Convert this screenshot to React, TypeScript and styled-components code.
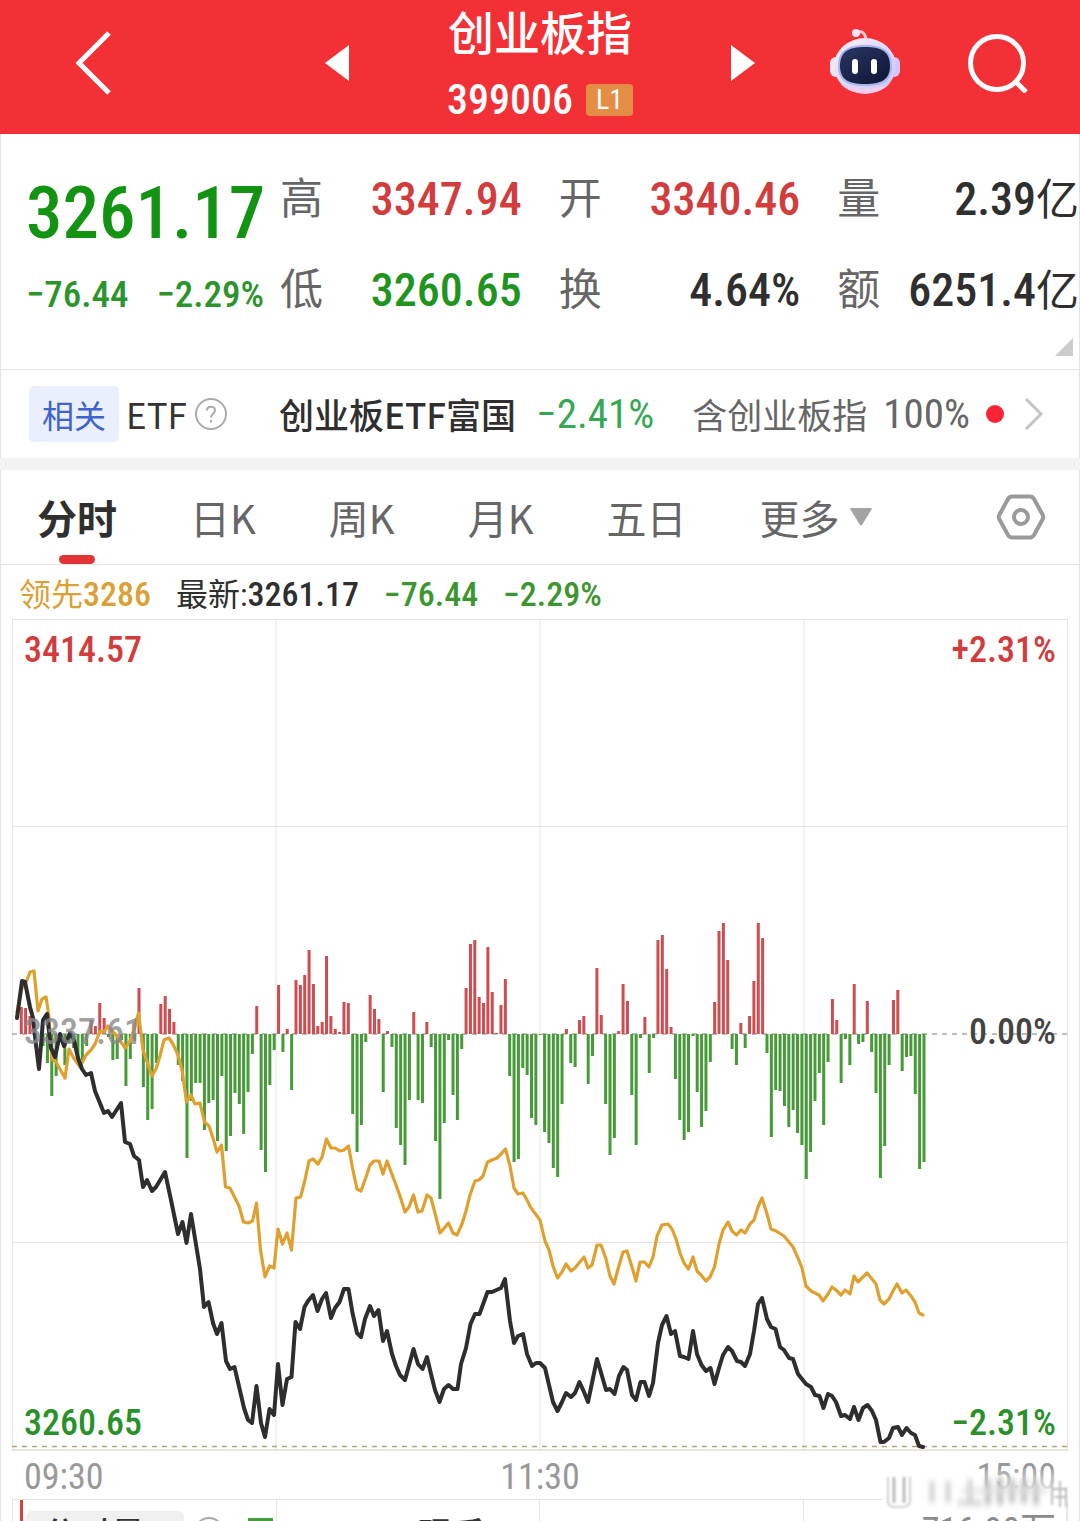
import React from "react";
import styled, { createGlobalStyle } from "styled-components";

const GlobalStyle = createGlobalStyle`
  * { box-sizing: border-box; }
  body {
    margin: 0;
    background: #fff;
    font-family: "Roboto Condensed", Roboto, "Noto Sans CJK SC", sans-serif;
    color: #333;
  }
  button {
    border: 0;
    padding: 0;
    background: none;
    font: inherit;
    color: inherit;
    cursor: pointer;
  }
  dl, dt, dd, h1, p { margin: 0; }
  svg { display: block; }
`;

const cjk = `"Noto Sans CJK SC", sans-serif`;

const palette = {
  red: "#d23c3c",
  green: "#129312",
  softGreen: "#3c9630",
  dark: "#2f2f2f",
  grey: "#666",
  line: "#e6e6e6",
};

const Page = styled.div`
  display: flex;
  flex-direction: column;
  height: 100vh;
  overflow: hidden;
`;

const Header = styled.header`
  flex: none;
  display: grid;
  grid-template-columns: 1fr 430px 1fr;
  align-items: center;
  height: 134px;
  background: #f23036;
  color: #fff;
`;

const HeaderButton = styled.button`
  padding-bottom: 9px;
`;

const HeaderLeft = styled.div`
  padding-left: 75px;
`;

const HeaderCenter = styled.div`
  display: flex;
  align-items: center;
  justify-content: space-between;
`;

const HeaderRight = styled.div`
  display: flex;
  align-items: center;
  justify-content: flex-end;
  gap: 67px;
  padding-right: 52px;
`;

const TitleBlock = styled.div`
  display: flex;
  flex-direction: column;
  align-items: center;
`;

const Title = styled.h1`
  font-size: 46px;
  line-height: 66px;
  font-weight: 500;
`;

const CodeLine = styled.div`
  display: flex;
  align-items: center;
  gap: 13px;
  font-size: 42px;
  line-height: 66px;
  font-weight: 500;
`;

const LevelBadge = styled.span`
  padding: 0 10px;
  border-radius: 4px;
  background: #e48d45;
  font-size: 28px;
  line-height: 32px;
  font-weight: 400;
`;

const Content = styled.main`
  flex: 1;
  display: flex;
  flex-direction: column;
  box-shadow: inset 1px 0 #e2e2e2, inset -1px 0 #e2e2e2;
`;

const Quote = styled.section`
  flex: none;
  position: relative;
  display: grid;
  grid-template-columns: 254px 1fr;
  height: 236px;
  padding: 20px 1px 0 26px;
  border-bottom: 1px solid ${palette.line};
`;

const LastPrice = styled.div`
  font-size: 73px;
  line-height: 118px;
  font-weight: 500;
  color: ${palette.green};
`;

const ChangeRow = styled.div`
  display: flex;
  justify-content: space-between;
  padding-right: 16px;
  font-size: 37px;
  line-height: 46px;
  font-weight: 500;
  color: #2c942c;
`;

const Stats = styled.dl`
  display: grid;
  grid-template-columns: repeat(3, 1fr);
  grid-auto-rows: 91px;
  column-gap: 37px;
`;

const Stat = styled.div`
  display: flex;
  justify-content: space-between;
  font-size: 43px;
  line-height: 91px;
  white-space: nowrap;
`;

const StatLabel = styled.dt`
  color: ${palette.grey};
`;

const StatValue = styled.dd<{ $color: string }>`
  font-size: 46px;
  font-weight: 500;
  color: ${(p) => p.$color};
`;

const Unit = styled.span`
  font-size: 43px;
  font-weight: 400;
`;

const ExpandCorner = styled.button`
  position: absolute;
  right: 7px;
  bottom: 13px;
  width: 18px;
  height: 18px;
  background: #ccc;
  clip-path: polygon(100% 0, 100% 100%, 0 100%);
`;

const Related = styled.section`
  flex: none;
  display: flex;
  align-items: center;
  height: 100px;
  padding: 0 36px 0 29px;
  border-bottom: 12px solid #f3f3f3;
  font-family: ${cjk};
  font-size: 35px;
  line-height: 56px;
  white-space: nowrap;
`;

const RelatedBadge = styled.span`
  margin-right: 7px;
  padding: 0 13px;
  border-radius: 5px;
  background: #e9effd;
  font-size: 32px;
  color: #3f62cc;
`;

const HelpButton = styled.button`
  margin-left: 8px;
`;

const EtfLink = styled.a`
  flex: 1;
  display: flex;
  align-items: center;
  justify-content: space-between;
  margin-left: 52px;
  color: ${palette.grey};
  text-decoration: none;
`;

const EtfName = styled.span`
  font-weight: 500;
  color: ${palette.dark};
`;

const Figure = styled.span<{ $color?: string }>`
  font-family: "Roboto Condensed", Roboto, sans-serif;
  font-size: 41px;
  color: ${(p) => p.$color ?? "inherit"};
`;

const EtfShare = styled.span`
  display: flex;
  align-items: center;
  gap: 16px;
  margin-left: 18px;
`;

const RedDot = styled.span`
  width: 18px;
  height: 18px;
  border-radius: 50%;
  background: #fa2434;
`;

const Tabs = styled.nav`
  flex: none;
  display: flex;
  align-items: center;
  gap: 73px;
  height: 95px;
  padding: 0 34px 0 37px;
  border-bottom: 1px solid ${palette.line};
  font-family: ${cjk};
`;

const Tab = styled.button<{ $active?: boolean }>`
  position: relative;
  display: flex;
  align-items: center;
  gap: 10px;
  font-size: 40px;
  line-height: 92px;
  font-weight: ${(p) => (p.$active ? 700 : 400)};
  color: ${(p) => (p.$active ? palette.dark : palette.grey)};

  &::after {
    content: "";
    display: ${(p) => (p.$active ? "block" : "none")};
    position: absolute;
    left: calc(50% - 18px);
    bottom: -1px;
    width: 36px;
    height: 9px;
    border-radius: 5px;
    background: #e23434;
  }
`;

const SettingsButton = styled.button`
  margin-left: auto;
`;

const Legend = styled.div`
  flex: none;
  display: flex;
  gap: 25px;
  height: 54px;
  padding-left: 19px;
  font-size: 34px;
  line-height: 58px;
  font-weight: 500;
  white-space: nowrap;
`;

const LegendItem = styled.span<{ $color: string }>`
  color: ${(p) => p.$color};
`;

const LegendName = styled.span`
  font-size: 32px;
  font-weight: 400;
`;

const Plot = styled.section`
  flex: none;
  position: relative;
  height: 832px;
  margin: 0 12px;
`;

const PlotSvg = styled.svg`
  width: 100%;
  height: 100%;
`;

type Corner = "top" | "middle" | "bottom";
const cornerTop: Record<Corner, number> = { top: 11, middle: 393, bottom: 784 };

const AxisLabel = styled.span<{ $at: Corner; $side: "left" | "right"; $color: string }>`
  position: absolute;
  top: ${(p) => cornerTop[p.$at]}px;
  ${(p) => p.$side}: 12px;
  font-size: 36px;
  line-height: 40px;
  font-weight: 500;
  color: ${(p) => p.$color};
`;

const TimeAxis = styled.div`
  flex: none;
  display: flex;
  justify-content: space-between;
  height: 48px;
  padding: 0 24px;
  font-size: 36px;
  line-height: 52px;
  color: #999;
`;

const SubPanel = styled.section`
  position: relative;
  flex: 1;
  min-height: 0;
  overflow: hidden;
  display: grid;
  grid-template-columns: repeat(4, 1fr);
  margin: 0 12px;
  border: solid ${palette.line};
  border-width: 1px 1px 0;
`;

const SubCell = styled.div`
  border-right: 1px solid ${palette.line};

  &:last-child { border-right: 0; }
`;

const SubHeader = styled.div`
  position: absolute;
  inset: 0 11px auto 7px;
  display: flex;
  align-items: flex-start;
  border-left: 3px solid #d9403a;
  padding: 11px 0 0 3px;
  font-size: 34px;
  line-height: 48px;
  white-space: nowrap;
`;

const SubPicker = styled.button`
  width: 158px;
  padding-left: 17px;
  border-radius: 6px;
  background: #f0f0f0;
  line-height: 48px;
  font-weight: 500;
  text-align: left;
`;

const SubHelp = styled.span`
  margin: 6px 24px 0 10px;
`;

const GreenBox = styled.span`
  width: 25px;
  height: 25px;
  margin: 7px 145px 0 0;
  border: 3px solid #43a03a;
`;

const SubMetric = styled.span`
  font-weight: 500;
`;

const SubTotal = styled.span`
  margin-left: auto;
  font-size: 36px;
  line-height: 40px;
  color: #8b8b8b;
`;

const Watermark = styled.svg`
  position: absolute;
  right: 8px;
  bottom: 6px;
`;

/* Extent of each per-minute bar from the zero line; positive is up. */
const bars: number[] = [
  0, 27, 26, 18, 3, 0, -12, -29, -62, -42, -6, -31, -9, -14, -26, -26, -12, 14, 8, 31, 16, -3, -26, -25, -6, -52,
  -25, -7, 46, -53, -86, -75, -29, 30, 38, 25, 12, -31, -47, -124, -67, -49, -49, -96, -69, -66, -107, -42, -117,
  -102, -59, -70, -100, -58, -20, 28, -116, -138, -51, -16, 49, -18, 5, -56, 54, 49, 59, 84, 50, 8, 12, 78, 18, 5,
  2, 32, 31, -80, -118, -91, -8, 39, 25, 15, -58, 3, -13, -94, -111, -131, -66, 22, -66, -69, 12, -13, -107, -165,
  -89, -6, -61, -86, -15, 46, 90, 94, 37, 31, 87, 42, 1, 29, 55, -42, -128, -125, -34, -41, -84, -91, -1, -98,
  -109, -134, -143, -70, 5, -29, -33, 14, 18, -50, -22, 66, 19, -70, -121, -104, 3, 50, 33, -61, -111, -4, 17, -39,
  -4, 94, 99, 65, 7, -45, -86, -106, -98, -2, -58, -93, -77, -28, 32, 103, 111, 74, -15, -31, 11, -14, 18, 53, 111,
  96, -19, -103, -56, -57, -72, -93, -76, -99, -111, -145, -118, -67, -39, -91, -28, 35, 14, -49, -5, -31, 50, -10,
  -8, 33, -18, -59, -144, -112, -31, 34, 44, -37, -23, -22, -60, -135, -128,
];

const indexLine =
  "17,1018 22,981 25,982 30,1007 33,1018 36,1045 39,1069 43,1020 47,1014 51,1048 55,1057 60,1034 64,1046 70,1033 74,1040 78,1058 82,1069 86,1075 91,1073 95,1091 104,1113 108,1111 112,1117 121,1103 125,1142 130,1144 134,1156 139,1160 143,1187 147,1180 152,1191 156,1187 165,1172 171,1200 178,1234 182.5,1222 186.5,1243 191,1214 200,1269 204,1307 208.5,1302 213,1323 217,1334 221.5,1323 226,1361 230,1369 234.5,1367 244,1408 248,1420 252,1423 256.5,1386 261,1423 265,1437 269.5,1409 274,1415 278,1364 282.5,1405 287,1379 291.5,1377 295.5,1322 300,1329 304.5,1307 308,1301 313,1295 317.5,1311 322,1299 326,1293 331,1318 335,1308 339.5,1302 344,1289 348.5,1289 352.5,1313 357,1333 361,1337 365,1319 370,1306 374,1316 378.5,1310 383,1341 387,1331 392,1354 396,1366 400,1375 405,1380 413.5,1349 418,1364 422.5,1369 427,1357 431,1374 435,1390 439.5,1402 444,1389 448.5,1385 453,1389 457.5,1389 461,1364 466,1348 470.5,1324 475,1314 479.5,1314 487.5,1292 492,1292 501,1288 505,1279 510,1321 514,1343 518,1336 523,1334 527,1354 532,1366 536,1363 540,1363 545,1368 549,1385 553,1402 557.5,1411 562,1402 566,1393 571,1397 575,1393 579.5,1382 584,1392 588,1402 597,1359 602,1376 606,1390 610,1389 614.5,1394 619,1376 623.5,1367 627,1370 632,1395 636,1400 640.5,1382 644.5,1382 649,1396 653,1383 658,1343 662,1325 666.5,1316 671,1334 675,1331 680,1356 684,1357 688.5,1359 693,1331 697,1354 701.5,1365 706,1371 710.5,1368 714.5,1384 719,1368 723,1355 728,1347 732,1351 737,1361 741,1362 745,1366 750,1354 754,1331 758,1304 762,1298 767,1319 771,1327 775.5,1329 780,1347 784,1350 789,1358 793,1359 798,1374 806,1384 811,1387 815,1395 819.5,1396 823.5,1408 828,1394 832,1396 836,1402 841,1416 845,1415 850,1419 854,1407 858.5,1420 863,1408 867.5,1405 872,1411 876,1420 880.5,1442 884,1442 889,1438 893,1428 898,1427 902,1435 906.5,1428 911,1433 915,1435 919,1446 923,1447";

const leadLine =
  "17,1012 22,988 27,980 30,972 34,971 38,1011 42,999 46,997 49,1017 51,1048 52,1059 56,1062 65,1078 69,1049 73,1057 80,1067 86,1055 91,1050 95,1044 100,1031 104,1032 108,1026 112,1031 117,1036 125,1048 130,1041 134,1030 138.5,1013 143,1050 152,1076 156,1069 160,1056 164,1040 169,1038 173,1044 178,1055 182,1070 186.5,1102 191,1095 195,1104 200,1103 204.5,1122 209,1126 213,1138 217,1152 221.5,1145 225.5,1187 230,1188 239,1206 243.5,1222 248,1223 252.5,1221 256.5,1203 260.5,1250 265,1277 269.5,1266 274,1268 278,1229 282.5,1244 287,1233 291.5,1250 296,1198 300.5,1197 304.5,1182 309,1161 313,1159 318,1164 322,1157 326.5,1139 331,1148 335,1148 340,1151 344,1150 348.5,1146 352.5,1168 357,1189 361,1191 366,1177 370,1165 374,1161 379,1161 383,1174 387,1161 396,1185 400,1196 405,1212 409,1207 413.5,1195 418,1212 422,1211 427,1195 431,1198 435,1213 440,1233 448.5,1223 453,1233 457,1235 462,1224 466,1211 470,1195 475,1181 479,1180 483,1176 487.5,1162 492,1160 497,1158 501,1154 505.5,1149 510,1166 514,1188 518,1194 523,1193 527,1200 531,1208 540,1220 545,1241 549,1250 553,1266 557.5,1278 562,1272 566,1264 571,1271 575,1268 579,1263 584,1257 588,1268 592,1265 597,1245 601,1245 606,1259 610,1276 614,1284 618,1269 623,1252 627,1251 632,1267 636,1281 640,1262 644.5,1262 649,1267 653,1257 657,1236 662,1225 668,1224 672,1229 676,1239 680,1253 684,1263 688.5,1269 693,1257 697,1271 701,1275 706,1281 710,1277 714.5,1267 719,1244 723,1230 728,1222 732,1231 736.5,1235 741,1230 745,1233 750,1224 754,1220 758,1207 762,1198 767,1214 771,1229 776,1231 784,1236 789,1242 793,1247 798,1258 802,1268 806,1286 811,1291 819,1295 823,1301 828,1294 832,1287 836,1290 841,1295 845,1290 850,1294 854,1276 858,1282 863,1277 867,1273 872,1279 876,1284 880,1300 884,1304 889,1299 893,1291 897,1284 902,1293 906,1290 911,1296 915,1302 919,1313 923,1315";

const stats = [
  { label: "高", value: "3347.94", unit: "", color: palette.red },
  { label: "开", value: "3340.46", unit: "", color: palette.red },
  { label: "量", value: "2.39", unit: "亿", color: palette.dark },
  { label: "低", value: "3260.65", unit: "", color: "#1f951f" },
  { label: "换", value: "4.64%", unit: "", color: palette.dark },
  { label: "额", value: "6251.4", unit: "亿", color: palette.dark },
];

function RobotIcon() {
  return (
    <svg width="72" height="72" viewBox="0 0 72 72" aria-hidden="true">
      <defs>
        <linearGradient id="shell" x1="0" y1="0" x2="1" y2="1">
          <stop offset="0" stopColor="#fbeef6" />
          <stop offset="0.55" stopColor="#dcd9fb" />
          <stop offset="1" stopColor="#c9c2f6" />
        </linearGradient>
        <linearGradient id="visor" x1="0" y1="0" x2="0.8" y2="1">
          <stop offset="0" stopColor="#2b3763" />
          <stop offset="1" stopColor="#0f1838" />
        </linearGradient>
      </defs>
      <path d="M27 6 C33 3 36 6 37 12" fill="none" stroke="#f9c9d6" strokeWidth="3" strokeLinecap="round" />
      <circle cx="27" cy="6" r="4" fill="#fde6ee" />
      <rect x="1" y="30" width="12" height="20" rx="6" fill="#f7e4f2" />
      <rect x="59" y="30" width="12" height="20" rx="6" fill="#cfc8fa" />
      <ellipse cx="36" cy="39" rx="31" ry="28" fill="url(#shell)" />
      <path d="M11 55 C18 70 54 70 61 55 C54 64 18 64 11 55Z" fill="#f3cdea" />
      <path d="M36 18C54 18 63 24 63 39C63 54 54 59 36 59C18 59 9 54 9 39C9 24 18 18 36 18Z" fill="#a9b4f3" />
      <path d="M36 20C53 20 61 25 61 39C61 52 53 57 36 57C19 57 11 52 11 39C11 25 19 20 36 20Z" fill="url(#visor)" />
      <rect x="23" y="32" width="6" height="15" rx="3" fill="#fff" />
      <rect x="42" y="32" width="6" height="15" rx="3" fill="#fff" />
    </svg>
  );
}

function SmearedMark() {
  return (
    <Watermark width="190" height="46" viewBox="0 0 190 46" aria-hidden="true">
      <defs>
        <filter id="smear" x="-20%" y="-20%" width="140%" height="140%">
          <feGaussianBlur stdDeviation="2.5 3" />
        </filter>
        <filter id="edge" x="-30%" y="-30%" width="160%" height="160%">
          <feGaussianBlur stdDeviation="1" />
        </filter>
        <linearGradient id="veil" x1="0" y1="0" x2="0" y2="1">
          <stop offset="0" stopColor="#fff" stopOpacity="0.1" />
          <stop offset="0.6" stopColor="#fff" stopOpacity="0.85" />
          <stop offset="1" stopColor="#fff" stopOpacity="0.9" />
        </linearGradient>
      </defs>
      <rect width="186" height="38" rx="6" fill="url(#veil)" />
      <g filter="url(#edge)" fill="none">
        <path d="M6 8V32Q6 38 13 38H20Q28 38 28 32V8" stroke="#cfcfcf" strokeWidth="2" />
        <path d="M12 8V34M22 8V34" stroke="#b9b9b9" strokeWidth="3" />
        <path d="M17 6V34" stroke="#fff" strokeWidth="5" />
        <path d="M170 10V36M170 20H184M172 28H184M178 12V38M184 18V38" stroke="#bdbdbd" strokeWidth="2" />
      </g>
      <g filter="url(#smear)" fill="none" stroke="#c4c4c4">
        <path d="M50 12V34M66 12V34M76 34H100M88 10V34" strokeWidth="4" />
        <path d="M106 10V36M118 8V36M130 10V34M142 10V34M154 12V36" strokeWidth="5" stroke="#b4b4b4" />
        <path d="M80 22H166" strokeWidth="4" stroke="#dcdcdc" />
      </g>
    </Watermark>
  );
}

function Chart() {
  const left = 12;
  const top = 619;
  const zero = 1034;
  return (
    <PlotSvg viewBox="12 619 1056 832" preserveAspectRatio="none" role="img" aria-label="分时走势图">
      <g stroke="#e4e4e4" strokeWidth="1">
        <path d="M12 619.5H1068 M12 826.5H1068 M12 1242.5H1068" />
        <path d="M12.5 619V1450 M276 619V1450 M540 619V1450 M804 619V1450 M1067.5 619V1450" />
      </g>
      <path d={`M${left} 1450H1068`} stroke="#ebe6dc" strokeWidth="2" />
      <path d={`M${left} ${zero}H1068`} stroke="#a8a8a8" strokeWidth="1.5" strokeDasharray="5 5" />
      {bars.map((v, i) => {
        if (v === 0) return null;
        return (
          <rect
            key={i}
            x={16.9 + i * 4.361 - 1.5}
            y={v > 0 ? zero - v : zero}
            width={3}
            height={Math.abs(v)}
            fill={v > 0 ? "#cf4d50" : "#479a38"}
          />
        );
      })}
      <polyline points={leadLine} fill="none" stroke="#e0a030" strokeWidth="3.2" strokeLinejoin="round" strokeLinecap="round" />
      <path d={`M${left} ${top + 827.5}H1068`} stroke="#b3a27c" strokeWidth="1.5" strokeDasharray="5 5" />
      <polyline points={indexLine} fill="none" stroke="#2e2e2e" strokeWidth="4" strokeLinejoin="round" strokeLinecap="round" />
    </PlotSvg>
  );
}

export default function App() {
  return (
    <Page>
      <GlobalStyle />
      <Header>
        <HeaderLeft>
          <HeaderButton aria-label="返回">
            <svg width="38" height="66" viewBox="0 0 38 66" fill="none" stroke="#fff" strokeWidth="5">
              <path d="M34 3L4 33L34 63" />
            </svg>
          </HeaderButton>
        </HeaderLeft>
        <HeaderCenter>
          <HeaderButton aria-label="上一个">
            <svg width="24" height="36" viewBox="0 0 24 36"><path d="M0 18L24 0V36Z" fill="#fff" /></svg>
          </HeaderButton>
          <TitleBlock>
            <Title>创业板指</Title>
            <CodeLine>
              399006 <LevelBadge>L1</LevelBadge>
            </CodeLine>
          </TitleBlock>
          <HeaderButton aria-label="下一个">
            <svg width="24" height="36" viewBox="0 0 24 36"><path d="M24 18L0 0V36Z" fill="#fff" /></svg>
          </HeaderButton>
        </HeaderCenter>
        <HeaderRight>
          <HeaderButton aria-label="智能助手"><RobotIcon /></HeaderButton>
          <HeaderButton aria-label="搜索">
            <svg width="60" height="60" viewBox="0 0 60 60" fill="none" stroke="#fff" strokeWidth="5">
              <circle cx="29" cy="30" r="26.5" />
              <path d="M47 48L58 59" />
            </svg>
          </HeaderButton>
        </HeaderRight>
      </Header>

      <Content>
        <Quote>
          <div>
            <LastPrice>3261.17</LastPrice>
            <ChangeRow>
              <span>−76.44</span>
              <span>−2.29%</span>
            </ChangeRow>
          </div>
          <Stats>
            {stats.map((s) => (
              <Stat key={s.label}>
                <StatLabel>{s.label}</StatLabel>
                <StatValue $color={s.color}>
                  {s.value}
                  {s.unit && <Unit>{s.unit}</Unit>}
                </StatValue>
              </Stat>
            ))}
          </Stats>
          <ExpandCorner aria-label="展开" />
        </Quote>

        <Related>
          <RelatedBadge>相关</RelatedBadge>
          <span>ETF</span>
          <HelpButton aria-label="说明">
            <svg width="32" height="32" viewBox="0 0 32 32" fill="none" stroke="#aaa" strokeWidth="2">
              <circle cx="16" cy="16" r="15" />
              <path d="M12 12.5C12 7.5 20 7.5 20 12.5C20 15.5 16 15.5 16 19.5M16 22V24.5" />
            </svg>
          </HelpButton>
          <EtfLink href="#etf">
            <EtfName>创业板ETF富国</EtfName>
            <Figure $color="#35a853">−2.41%</Figure>
            <EtfShare>
              <span>含创业板指</span>
              <Figure>100%</Figure>
              <RedDot />
            </EtfShare>
            <svg width="20" height="36" viewBox="0 0 20 36" fill="none" stroke="#c4c4c4" strokeWidth="3">
              <path d="M2 3L17 18L2 33" />
            </svg>
          </EtfLink>
        </Related>

        <Tabs>
          <Tab $active>分时</Tab>
          <Tab>日K</Tab>
          <Tab>周K</Tab>
          <Tab>月K</Tab>
          <Tab>五日</Tab>
          <Tab>
            更多
            <svg width="22" height="18" viewBox="0 0 22 18"><path d="M1 0H21Q22 0 21.5 1.5L12 17Q11 18 10 17L0.5 1.5Q0 0 1 0Z" fill="#a3a3a3" /></svg>
          </Tab>
          <SettingsButton aria-label="设置">
            <svg width="50" height="48" viewBox="0 0 50 48" fill="none" stroke="#9a9a9a" strokeWidth="4">
              <path d="M16 3.5H34Q36.5 3.5 38 6L46.5 21.5Q48 24 46.5 26.5L38 42Q36.5 44.5 34 44.5H16Q13.5 44.5 12 42L3.5 26.5Q2 24 3.5 21.5L12 6Q13.5 3.5 16 3.5Z" />
              <circle cx="25" cy="24" r="7" />
            </svg>
          </SettingsButton>
        </Tabs>

        <Legend>
          <LegendItem $color="#dba036"><LegendName>领先</LegendName>3286</LegendItem>
          <LegendItem $color={palette.dark}><LegendName>最新:</LegendName>3261.17</LegendItem>
          <LegendItem $color={palette.softGreen}>−76.44</LegendItem>
          <LegendItem $color={palette.softGreen}>−2.29%</LegendItem>
        </Legend>

        <Plot>
          <Chart />
          <AxisLabel $at="top" $side="left" $color={palette.red}>3414.57</AxisLabel>
          <AxisLabel $at="top" $side="right" $color={palette.red}>+2.31%</AxisLabel>
          <AxisLabel $at="middle" $side="left" $color="rgba(135, 135, 135, 0.8)">3337.61</AxisLabel>
          <AxisLabel $at="middle" $side="right" $color="#444">0.00%</AxisLabel>
          <AxisLabel $at="bottom" $side="left" $color="#2a912a">3260.65</AxisLabel>
          <AxisLabel $at="bottom" $side="right" $color="#2a912a">−2.31%</AxisLabel>
        </Plot>
        <TimeAxis>
          <span>09:30</span>
          <span>11:30</span>
          <span>15:00</span>
        </TimeAxis>
        <SubPanel>
          <SubCell />
          <SubCell />
          <SubCell />
          <SubCell />
          <SubHeader>
            <SubPicker>分时量</SubPicker>
            <SubHelp>
              <svg width="30" height="30" viewBox="0 0 30 30" fill="none" stroke="#aaa" strokeWidth="2"><circle cx="15" cy="15" r="14" /></svg>
            </SubHelp>
            <GreenBox />
            <SubMetric>现手</SubMetric>
            <SubTotal>716.90万</SubTotal>
          </SubHeader>
        </SubPanel>
      </Content>
      <SmearedMark />
    </Page>
  );
}
